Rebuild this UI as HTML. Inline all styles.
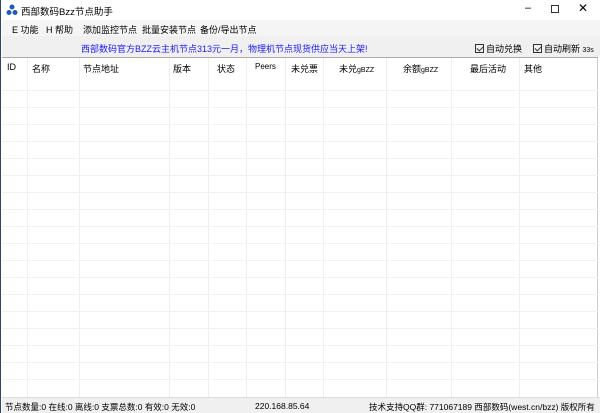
<!DOCTYPE html>
<html><head><meta charset="utf-8"><style>
*{margin:0;padding:0;box-sizing:border-box}
body{width:600px;height:413px;overflow:hidden;background:#fff;font-family:"Liberation Sans","Noto Sans CJK SC",sans-serif;font-size:9px;color:#000;position:relative;border-left:1px solid #2b4a6b;}
.abs{position:absolute;white-space:nowrap}
#title{left:0;top:0;width:600px;height:20px;background:#fff}
#menu{left:1px;top:20px;width:599px;height:16px;background:#f5f5f5}
#banner{left:1px;top:36px;width:599px;height:21px;background:#f0f0f0}
#table{left:1px;top:57px;width:596px;height:340px;background:#fff;border-top:1px solid #aaa}
#status{left:1px;top:397px;width:599px;height:16px;background:#f0f0f0;border-top:1px solid #ddd}
.vl{position:absolute;top:0;bottom:0;width:1px;background:#eee}
.hl{position:absolute;left:0;right:0;height:1px;background:#f2f2f2}
.cb{display:inline-block;width:9px;height:9px;border:1px solid #333;position:relative;vertical-align:-1px;margin-right:2px}
.cb:after{content:"";position:absolute;left:2px;top:0px;width:3px;height:5px;border:solid #333;border-width:0 1px 1px 0;transform:rotate(45deg)}
</style></head><body>
<div class="abs" id="title"></div>
<svg class="abs" style="left:5px;top:4px" width="12" height="12" viewBox="0 0 12 12"><circle cx="6" cy="3" r="2.5" fill="#1e5bb8"/><circle cx="3" cy="8.5" r="2.5" fill="#1e5bb8"/><circle cx="9" cy="8.5" r="2.5" fill="#1e5bb8"/></svg>
<div class="abs" style="left:20px;top:4px;font-size:9.5px">西部数码Bzz节点助手</div>
<div class="abs" style="left:524px;top:2px;font-size:11px">–</div>
<div class="abs" style="left:550px;top:5px;width:8px;height:8px;border:1px solid #333"></div>
<div class="abs" style="left:577px;top:1px;font-size:12px">✕</div>
<div class="abs" id="menu"></div>
<div class="abs" style="left:11px;top:23px">E 功能</div>
<div class="abs" style="left:45px;top:23px">H 帮助</div>
<div class="abs" style="left:82px;top:23px">添加监控节点</div>
<div class="abs" style="left:141px;top:23px">批量安装节点</div>
<div class="abs" style="left:199px;top:23px">备份/导出节点</div>
<div class="abs" id="banner"></div>
<div class="abs" style="left:80px;top:42px;color:#1a1aff">西部数码官方BZZ云主机节点313元一月，物理机节点现货供应当天上架!</div>
<div class="abs" style="left:474px;top:42px"><span class="cb"></span>自动兑换</div>
<div class="abs" style="left:532px;top:42px"><span class="cb"></span>自动刷新 <span style="font-size:7px">33s</span></div>
<div class="abs" id="table">
<div class="vl" style="left:25px"></div><div class="vl" style="left:77px"></div><div class="vl" style="left:167px"></div><div class="vl" style="left:206px"></div><div class="vl" style="left:244px"></div><div class="vl" style="left:283px"></div><div class="vl" style="left:321px"></div><div class="vl" style="left:384px"></div><div class="vl" style="left:449px"></div><div class="vl" style="left:517px"></div><div class="vl" style="left:595px;background:#ccc"></div>
<div class="hl" style="top:32px"></div><div class="hl" style="top:49px"></div><div class="hl" style="top:66px"></div><div class="hl" style="top:83px"></div><div class="hl" style="top:100px"></div><div class="hl" style="top:117px"></div><div class="hl" style="top:134px"></div><div class="hl" style="top:151px"></div><div class="hl" style="top:168px"></div><div class="hl" style="top:185px"></div><div class="hl" style="top:202px"></div><div class="hl" style="top:219px"></div><div class="hl" style="top:236px"></div><div class="hl" style="top:253px"></div><div class="hl" style="top:270px"></div><div class="hl" style="top:287px"></div><div class="hl" style="top:304px"></div><div class="hl" style="top:321px"></div>
</div>
<div class="abs" style="left:6px;top:62px">ID</div>
<div class="abs" style="left:31px;top:62px">名称</div>
<div class="abs" style="left:82px;top:62px">节点地址</div>
<div class="abs" style="left:172px;top:62px">版本</div>
<div class="abs" style="left:216px;top:62px">状态</div>
<div class="abs" style="left:254px;top:62px;font-size:8px">Peers</div>
<div class="abs" style="left:290px;top:62px">未兑票</div>
<div class="abs" style="left:338px;top:62px">未兑<span style="font-size:7px">gBZZ</span></div>
<div class="abs" style="left:402px;top:62px">余额<span style="font-size:7px">gBZZ</span></div>
<div class="abs" style="left:469px;top:62px">最后活动</div>
<div class="abs" style="left:523px;top:62px">其他</div>
<div class="abs" id="status"></div>
<div class="abs" style="left:4px;top:401px;font-size:8.5px">节点数量:0 在线:0 离线:0 支票总数:0 有效:0 无效:0</div>
<div class="abs" style="left:254px;top:401px;font-size:8.5px">220.168.85.64</div>
<div class="abs" style="left:368px;top:401px;font-size:8.5px">技术支持QQ群: 771067189 西部数码(west.cn/bzz) 版权所有</div>
</body></html>
